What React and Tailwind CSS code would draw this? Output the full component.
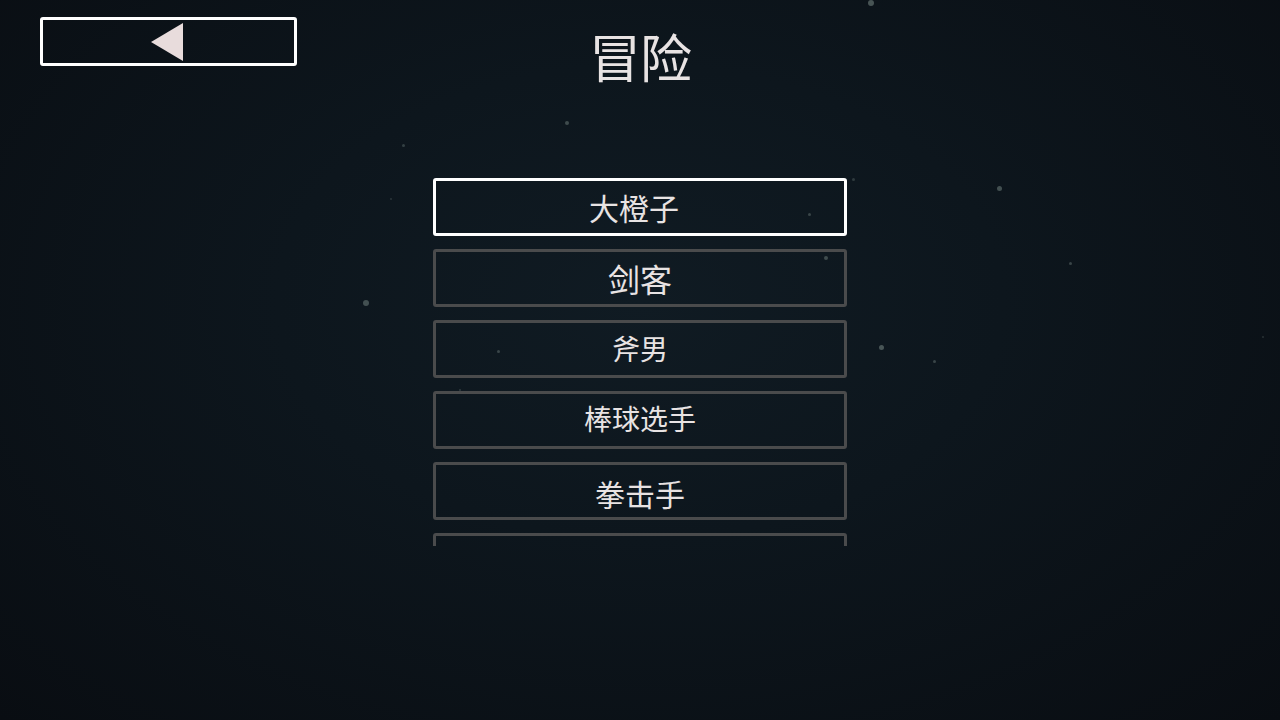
import React, { useState } from "react";

const HEROES = [
  { name: "大橙子", size: "text-[30px]", nudge: "-translate-x-[6px]" },
  { name: "剑客", size: "text-[32px]", nudge: "" },
  { name: "斧男", size: "text-[28px]", nudge: "-translate-y-[1px]" },
  { name: "棒球选手", size: "text-[28px]", nudge: "-translate-y-[2px]" },
  { name: "拳击手", size: "text-[30px]", nudge: "translate-y-[2px]" },
  { name: "", size: "text-[30px]", nudge: "" },
];

// floating dust specks
const DUST = [
  { x: 868, y: 0, s: 6, o: 0.6 },
  { x: 565, y: 121, s: 4, o: 0.5 },
  { x: 402, y: 144, s: 3, o: 0.4 },
  { x: 390, y: 198, s: 2, o: 0.3 },
  { x: 997, y: 186, s: 5, o: 0.55 },
  { x: 808, y: 213, s: 3, o: 0.45 },
  { x: 852, y: 178, s: 3, o: 0.35 },
  { x: 824, y: 256, s: 4, o: 0.5 },
  { x: 1069, y: 262, s: 3, o: 0.45 },
  { x: 363, y: 300, s: 6, o: 0.55 },
  { x: 879, y: 345, s: 5, o: 0.6 },
  { x: 933, y: 360, s: 3, o: 0.45 },
  { x: 497, y: 350, s: 3, o: 0.45 },
  { x: 459, y: 389, s: 2, o: 0.35 },
  { x: 1262, y: 336, s: 2, o: 0.3 },
];

export default function App() {
  const [selected, setSelected] = useState(0);

  return (
    <div
      className="relative w-[1280px] h-[720px] overflow-hidden bg-[radial-gradient(ellipse_at_50%_42%,#101b23_0%,#0d161d_40%,#090d12_100%)] text-[#e8e3e3]"
      style={{ fontFamily: '"Noto Sans CJK SC", "Noto Sans", sans-serif' }}
    >
      {DUST.map((d, i) => (
        <span
          key={i}
          className="absolute rounded-full bg-[#6f7f7c]"
          style={{ left: d.x, top: d.y, width: d.s, height: d.s, opacity: d.o }}
        />
      ))}

      <header className="relative grid grid-cols-[1fr_auto_1fr] items-start">
        <div className="pl-[40px] pt-[17px]">
          <button className="flex h-[49px] w-[257px] items-center justify-center rounded-[3px] border-[3px] border-white pr-[3px]">
            <svg width="32" height="38" viewBox="0 0 32 38">
              <polygon points="0,19 32,0 32,38" fill="#e8dcdc" />
            </svg>
          </button>
        </div>
        <h1 className="pt-[30px] text-[52px] leading-none tracking-[-1px]">冒险</h1>
        <div />
      </header>

      <div className="relative mx-auto mt-[96px] flex h-[368px] w-[414px] flex-col gap-[13px] overflow-hidden">
        {HEROES.map((h, i) => (
          <button
            key={i}
            onClick={() => setSelected(i)}
            className={`flex h-[58px] shrink-0 items-center justify-center rounded-[3px] border-[3px] ${
              selected === i ? "border-white" : "border-[#4a4b4c]"
            }`}
          >
            <span className={`${h.size} ${h.nudge} leading-none`}>{h.name}</span>
          </button>
        ))}
      </div>
    </div>
  );
}
